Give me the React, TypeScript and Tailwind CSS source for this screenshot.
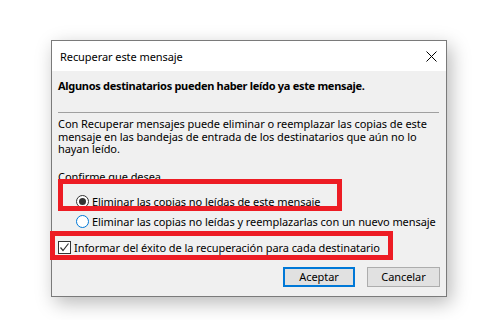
import React from "react";

const font = { fontFamily: '"Noto Sans", "Open Sans", sans-serif' };

export default function App() {
  return (
    <div className="relative w-[497px] h-[320px] bg-white overflow-hidden" style={font}>
      <div className="pl-[51px] pt-[40px]">
        <div className="w-[396px] h-[257px] border border-[#7a7a7a] bg-[#f0f0f0] shadow-[4px_6px_18px_rgba(0,0,0,0.28)] flex flex-col">
          <div className="h-[30px] bg-white flex items-center justify-between pl-[8px] pr-[9px]">
            <span className="text-[11px] tracking-[-0.07px] text-black leading-none">Recuperar este mensaje</span>
            <svg width="11" height="11" viewBox="0 0 11 11" className="block">
              <path d="M0.5 0.5 L10.5 10.5 M10.5 0.5 L0.5 10.5" stroke="#000" strokeWidth="1" fill="none" />
            </svg>
          </div>
          <div className="flex flex-col pl-[6px] pr-[6px] text-[11px] tracking-[-0.07px] text-black">
            <div className="mt-[7px] leading-[15px] font-bold tracking-[-0.3px] whitespace-nowrap">Algunos destinatarios pueden haber leído ya este mensaje.</div>
            <div className="mt-[19px] h-px w-[381px] bg-[#a0a0a0]" />
            <div className="mt-[5px] leading-[12.5px]">
              <div className="whitespace-nowrap">Con Recuperar mensajes puede eliminar o reemplazar las copias de este</div>
              <div className="whitespace-nowrap">mensaje en las bandejas de entrada de los destinatarios que aún no lo</div>
              <div className="whitespace-nowrap">hayan leído.</div>
            </div>
            <div className="mt-[13px] leading-[15px]">Confirme que desea</div>
            <div className="mt-[10px] flex items-center pl-[18px] h-[15px] leading-[15px] whitespace-nowrap">
              <span className="shrink-0 w-[13px] h-[13px] rounded-full border border-[#333] bg-white flex items-center justify-center">
                <span className="w-[7px] h-[7px] rounded-full bg-[#333]" />
              </span>
              <span className="ml-[3px]">Eliminar las copias no leídas de este mensaje</span>
            </div>
            <div className="mt-[5px] flex items-center pl-[18px] h-[15px] leading-[15px] whitespace-nowrap">
              <span className="shrink-0 w-[13px] h-[13px] rounded-full border border-[#0078d7] bg-white" />
              <span className="ml-[3px]">Eliminar las copias no leídas y reemplazarlas con un nuevo mensaje</span>
            </div>
            <div className="mt-[11px] flex items-center h-[15px] leading-[15px] whitespace-nowrap">
              <span className="shrink-0 w-[13px] h-[13px] border border-[#333] bg-white flex items-center justify-center">
                <svg width="11" height="11" viewBox="0 0 11 11">
                  <path d="M1.5 5.5 L4 8.5 L9.5 1.5" stroke="#333" strokeWidth="1.2" fill="none" />
                </svg>
              </span>
              <span className="ml-[3px]">Informar del éxito de la recuperación para cada destinatario</span>
            </div>
            <div className="mt-[12px] flex justify-end gap-[12px]">
              <button className="w-[72px] h-[20px] border-2 border-[#0078d7] bg-[#e1e1e1] text-[11px] leading-none text-black">Aceptar</button>
              <button className="w-[73px] h-[20px] border border-[#adadad] bg-[#e1e1e1] text-[11px] leading-none text-black">Cancelar</button>
            </div>
          </div>
        </div>
      </div>
      <div className="absolute left-[58px] top-[179px] w-[284px] h-[32px] border-[5px] border-[#ed1c24]" />
      <div className="absolute left-[50px] top-[231px] w-[343px] h-[29px] border-[5px] border-[#ed1c24]" />
    </div>
  );
}
